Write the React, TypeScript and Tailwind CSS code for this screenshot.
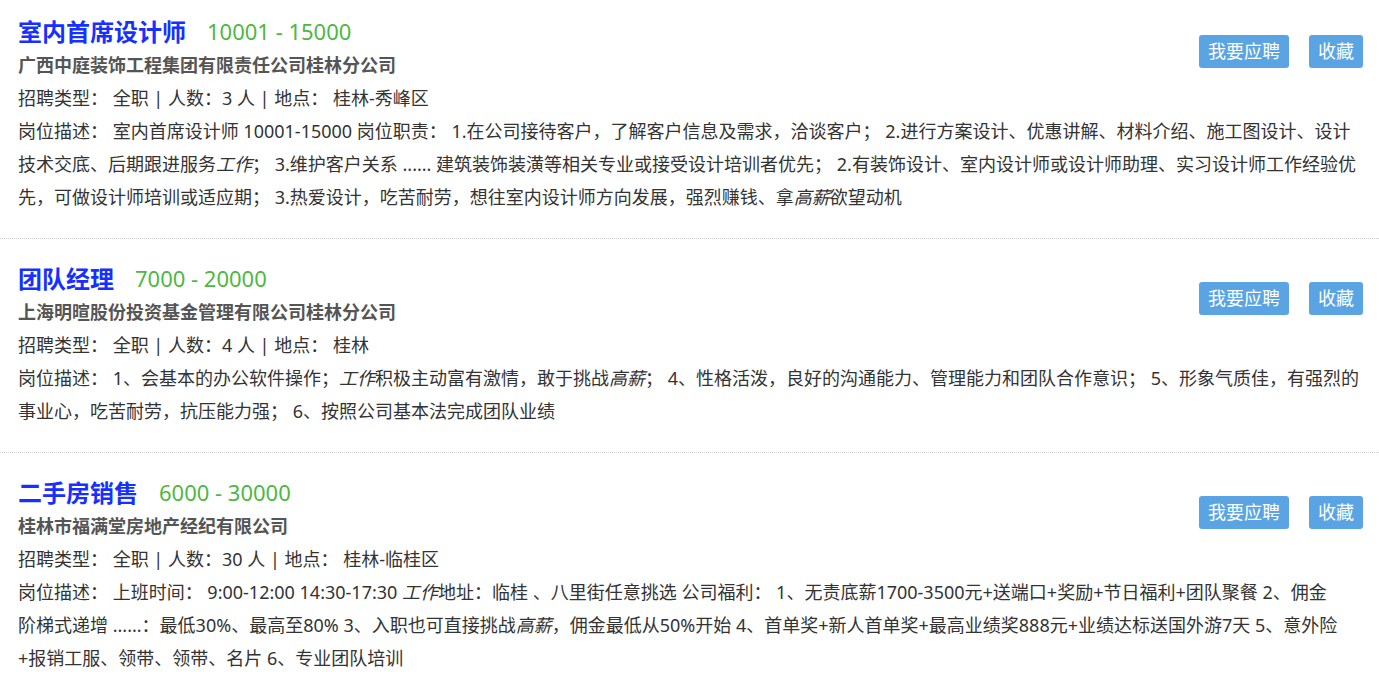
import React from 'react';

type Part = string | { em: string };

type Job = {
  title: string;
  salary: string;
  company: string;
  info: string;
  desc: Part[];
};

const jobs: Job[] = [
  {
    title: '室内首席设计师',
    salary: '10001 - 15000',
    company: '广西中庭装饰工程集团有限责任公司桂林分公司',
    info: '招聘类型： 全职 | 人数：3 人 | 地点： 桂林-秀峰区',
    desc: [
      '岗位描述： 室内首席设计师 10001-15000 岗位职责： 1.在公司接待客户，了解客户信息及需求，洽谈客户； 2.进行方案设计、优惠讲解、材料介绍、施工图设计、设计技术交底、后期跟进服务',
      { em: '工作' },
      '； 3.维护客户关系 ...... 建筑装饰装潢等相关专业或接受设计培训者优先； 2.有装饰设计、室内设计师或设计师助理、实习设计师工作经验优先，可做设计师培训或适应期； 3.热爱设计，吃苦耐劳，想往室内设计师方向发展，强烈赚钱、拿',
      { em: '高薪' },
      '欲望动机',
    ],
  },
  {
    title: '团队经理',
    salary: '7000 - 20000',
    company: '上海明暄股份投资基金管理有限公司桂林分公司',
    info: '招聘类型： 全职 | 人数：4 人 | 地点： 桂林',
    desc: [
      '岗位描述： 1、会基本的办公软件操作；',
      { em: '工作' },
      '积极主动富有激情，敢于挑战',
      { em: '高薪' },
      '； 4、性格活泼，良好的沟通能力、管理能力和团队合作意识； 5、形象气质佳，有强烈的事业心，吃苦耐劳，抗压能力强； 6、按照公司基本法完成团队业绩',
    ],
  },
  {
    title: '二手房销售',
    salary: '6000 - 30000',
    company: '桂林市福满堂房地产经纪有限公司',
    info: '招聘类型： 全职 | 人数：30 人 | 地点： 桂林-临桂区',
    // the original's latin glyphs run wider, so its breaks are pinned here
    desc: [
      '岗位描述： 上班时间： 9:00-12:00 14:30-17:30 ',
      { em: '工作' },
      '地址：临桂 、八里街任意挑选 公司福利： 1、无责底薪1700-3500元+送端口+奖励+节日福利+团队聚餐 2、佣金\n阶梯式递增 ......：最低30%、最高至80% 3、入职也可直接挑战',
      { em: '高薪' },
      '，佣金最低从50%开始 4、首单奖+新人首单奖+最高业绩奖888元+业绩达标送国外游7天 5、意外险\n+报销工服、领带、领带、名片 6、专业团队培训',
    ],
  },
];

function JobItem({ job, first }: { job: Job; first: boolean }) {
  return (
    <div
      className={
        'border-b border-dotted border-[#cccccc] pl-[18px] pr-[16px] pb-[24px] ' +
        (first ? 'pt-[14px]' : 'pt-[22px]')
      }
    >
      <div className="flex justify-between">
        <div>
          <div className="flex items-center h-[35px]">
            <span className="text-[24px] font-bold text-[#1530ff]">{job.title}</span>
            <span className="ml-[21px] text-[22px] text-[#4db840]">{job.salary}</span>
          </div>
          <div className="text-[18px] leading-[33px] font-bold text-[#555555]">{job.company}</div>
          <div className="text-[18px] leading-[33px] text-[#333333]">{job.info}</div>
        </div>
        <div className="flex gap-[20px] mt-[21px] shrink-0">
          <button className="h-[33px] w-[90px] rounded-[3px] bg-[#5ba4e4] text-white text-[18px] leading-[33px]">
            我要应聘
          </button>
          <button className="h-[33px] w-[54px] rounded-[3px] bg-[#5ba4e4] text-white text-[18px] leading-[33px]">
            收藏
          </button>
        </div>
      </div>
      <div className="text-[18px] leading-[33px] text-[#333333] whitespace-pre-line">
        {job.desc.map((p, i) =>
          typeof p === 'string' ? <span key={i}>{p}</span> : <em key={i} className="italic">{p.em}</em>
        )}
      </div>
    </div>
  );
}

export default function App() {
  return (
    <div
      className="w-[1379px] h-[685px] overflow-hidden bg-white"
      style={{ fontFamily: '"Noto Sans", "Noto Sans CJK SC", sans-serif' }}
    >
      {jobs.map((job, i) => (
        <JobItem key={i} job={job} first={i === 0} />
      ))}
    </div>
  );
}
